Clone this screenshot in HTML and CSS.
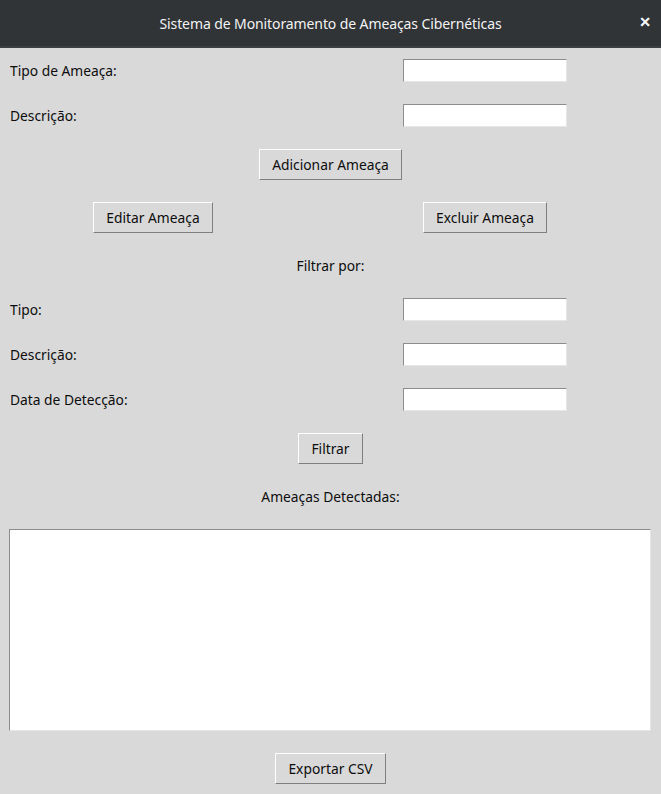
FILE: index.html
```html
<!DOCTYPE html>
<html lang="pt">
<head>
<meta charset="utf-8">
<title>Sistema de Monitoramento de Ameaças Cibernéticas</title>
<link rel="stylesheet" href="styles.css">
</head>
<body>
<div class="window">
  <header class="titlebar">
    <span class="title">Sistema de Monitoramento de Ameaças Cibernéticas</span>
    <span class="close">✕</span>
  </header>
  <main class="content">
    <div class="form">
      <div class="row">
        <span class="label">Tipo de Ameaça:</span>
        <span class="entry"></span>
      </div>
      <div class="row">
        <span class="label">Descrição:</span>
        <span class="entry"></span>
      </div>
      <div class="row tall full">
        <span class="button">Adicionar Ameaça</span>
      </div>
      <div class="row tall">
        <span class="button left-btn">Editar Ameaça</span>
        <span class="button right-btn">Excluir Ameaça</span>
      </div>
      <div class="row short full">
        <span class="label">Filtrar por:</span>
      </div>
      <div class="row">
        <span class="label">Tipo:</span>
        <span class="entry"></span>
      </div>
      <div class="row">
        <span class="label">Descrição:</span>
        <span class="entry"></span>
      </div>
      <div class="row">
        <span class="label">Data de Detecção:</span>
        <span class="entry"></span>
      </div>
      <div class="row tall full">
        <span class="button">Filtrar</span>
      </div>
      <div class="row medium full">
        <span class="label">Ameaças Detectadas:</span>
      </div>
    </div>
    <div class="listbox"></div>
    <div class="footer">
      <span class="button">Exportar CSV</span>
    </div>
  </main>
</div>
</body>
</html>
```
FILE: styles.css
```css
* { box-sizing: border-box; }
html, body {
  margin: 0;
  padding: 0;
  background: #d9d9d9;
}
body {
  font-family: "Noto Sans", "Open Sans", sans-serif;
  font-size: 13.8px;
  color: #0d0d0d;
}
.window {
  width: 661px;
  height: 794px;
  overflow: hidden;
}
.titlebar {
  height: 48px;
  background: #303437;
  border-bottom: 2px solid #3b4043;
  display: flex;
  align-items: center;
  justify-content: center;
  position: relative;
}
.title {
  color: #f2f2f2;
  font-family: "Noto Sans", sans-serif;
  font-size: 14px;
  font-stretch: condensed;
  letter-spacing: -0.1px;
  padding-top: 1px;
}
.close {
  position: absolute;
  right: 10px;
  top: 14px;
  color: #ffffff;
  font-size: 14px;
  font-weight: bold;
  font-family: "DejaVu Sans", sans-serif;
  -webkit-text-stroke: 0.6px #ffffff;
}
.content {
  display: flex;
  flex-direction: column;
}
.form {
  display: flex;
  flex-direction: column;
}
.row {
  display: grid;
  grid-template-columns: 309px 352px;
  align-items: center;
  height: 45px;
}
.row.tall { height: 53px; }
.row.short { height: 43px; }
.row.medium { height: 44px; }
.row.full {
  grid-template-columns: 1fr;
  justify-items: center;
}
.row > .label {
  padding-left: 10px;
  line-height: 16px;
}
.row.full > .label { padding-left: 0; }
.entry {
  justify-self: center;
  width: 164px;
  height: 23px;
  background: #ffffff;
  border-top: 1px solid #8c8c8c;
  border-left: 1px solid #8c8c8c;
  border-right: 1px solid #e6e6e6;
  border-bottom: 1px solid #e6e6e6;
}
.button {
  display: inline-flex;
  align-items: center;
  justify-content: center;
  height: 31px;
  padding: 0 12.5px;
  background: #d9d9d9;
  border-top: 1px solid #ffffff;
  border-left: 1px solid #ffffff;
  border-right: 1px solid #7f7f7f;
  border-bottom: 1px solid #7f7f7f;
  color: #0d0d0d;
}
.left-btn { justify-self: center; margin-left: -3px; }
.right-btn { justify-self: center; }
.listbox {
  margin: 10px 10px 0 9px;
  height: 202px;
  background: #ffffff;
  border-top: 1px solid #8c8c8c;
  border-left: 1px solid #8c8c8c;
  border-right: 1px solid #e6e6e6;
  border-bottom: 1px solid #e6e6e6;
}
.footer {
  display: flex;
  justify-content: center;
  padding-top: 22px;
}
```
